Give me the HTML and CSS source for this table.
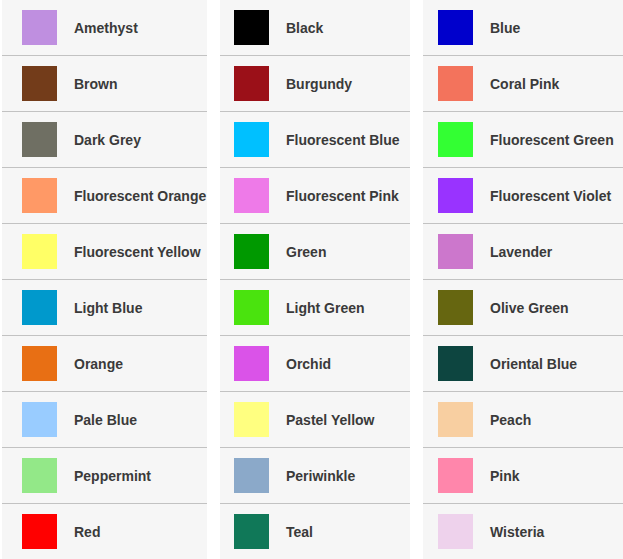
FILE: index.html
```html
<!DOCTYPE html>
<html>
<head>
<meta charset="utf-8">
<link rel="stylesheet" href="styles.css">
</head>
<body>
<div class="grid">
  <ul class="col col-1">
    <li class="item"><span class="sw" style="background:#bf8fe0"></span><span class="name">Amethyst</span></li>
    <li class="item"><span class="sw" style="background:#733c1a"></span><span class="name">Brown</span></li>
    <li class="item"><span class="sw" style="background:#6f6f63"></span><span class="name">Dark Grey</span></li>
    <li class="item"><span class="sw" style="background:#ff9966"></span><span class="name">Fluorescent Orange</span></li>
    <li class="item"><span class="sw" style="background:#ffff66"></span><span class="name">Fluorescent Yellow</span></li>
    <li class="item"><span class="sw" style="background:#0099cc"></span><span class="name">Light Blue</span></li>
    <li class="item"><span class="sw" style="background:#e86f14"></span><span class="name">Orange</span></li>
    <li class="item"><span class="sw" style="background:#99ccff"></span><span class="name">Pale Blue</span></li>
    <li class="item"><span class="sw" style="background:#93e888"></span><span class="name">Peppermint</span></li>
    <li class="item"><span class="sw" style="background:#ff0000"></span><span class="name">Red</span></li>
  </ul>
  <ul class="col col-2">
    <li class="item"><span class="sw" style="background:#000000"></span><span class="name">Black</span></li>
    <li class="item"><span class="sw" style="background:#9b1018"></span><span class="name">Burgundy</span></li>
    <li class="item"><span class="sw" style="background:#00c0ff"></span><span class="name">Fluorescent Blue</span></li>
    <li class="item"><span class="sw" style="background:#ee7ae8"></span><span class="name">Fluorescent Pink</span></li>
    <li class="item"><span class="sw" style="background:#009900"></span><span class="name">Green</span></li>
    <li class="item"><span class="sw" style="background:#4ae30e"></span><span class="name">Light Green</span></li>
    <li class="item"><span class="sw" style="background:#da53e8"></span><span class="name">Orchid</span></li>
    <li class="item"><span class="sw" style="background:#ffff80"></span><span class="name">Pastel Yellow</span></li>
    <li class="item"><span class="sw" style="background:#8ba9c9"></span><span class="name">Periwinkle</span></li>
    <li class="item"><span class="sw" style="background:#107858"></span><span class="name">Teal</span></li>
  </ul>
  <ul class="col col-3">
    <li class="item"><span class="sw" style="background:#0000cc"></span><span class="name">Blue</span></li>
    <li class="item"><span class="sw" style="background:#f3735c"></span><span class="name">Coral Pink</span></li>
    <li class="item"><span class="sw" style="background:#33ff33"></span><span class="name">Fluorescent Green</span></li>
    <li class="item"><span class="sw" style="background:#9933ff"></span><span class="name">Fluorescent Violet</span></li>
    <li class="item"><span class="sw" style="background:#cc77cc"></span><span class="name">Lavender</span></li>
    <li class="item"><span class="sw" style="background:#666610"></span><span class="name">Olive Green</span></li>
    <li class="item"><span class="sw" style="background:#0d4540"></span><span class="name">Oriental Blue</span></li>
    <li class="item"><span class="sw" style="background:#f8cfa1"></span><span class="name">Peach</span></li>
    <li class="item"><span class="sw" style="background:#ff86ab"></span><span class="name">Pink</span></li>
    <li class="item"><span class="sw" style="background:#eed2ec"></span><span class="name">Wisteria</span></li>
  </ul>
</div>
</body>
</html>
```
FILE: styles.css
```css
html, body {
  margin: 0;
  padding: 0;
  background: #ffffff;
  overflow: hidden;
}
body {
  font-family: "Liberation Sans", Arial, sans-serif;
}
.grid {
  display: flex;
  gap: 13px;
  padding-left: 2px;
}
.col {
  list-style: none;
  margin: 0;
  padding: 0;
  background: #f6f6f6;
  flex: none;
}
.col-1 { width: 205px; }
.col-2 { width: 190px; }
.col-3 { width: 200px; }
.item {
  display: flex;
  align-items: center;
  gap: 17px;
  height: 35px;
  padding: 10px 0;
  border-bottom: 1px solid #c2c2c2;
  white-space: nowrap;
}
.col-1 .item { padding-left: 20px; }
.col-2 .item { padding-left: 14px; }
.col-3 .item { padding-left: 15px; }
.sw {
  width: 35px;
  height: 35px;
  flex: none;
}
.name {
  font-size: 14px;
  font-weight: bold;
  color: #3a3a3a;
  line-height: 17px;
  padding-top: 1px;
}
```
